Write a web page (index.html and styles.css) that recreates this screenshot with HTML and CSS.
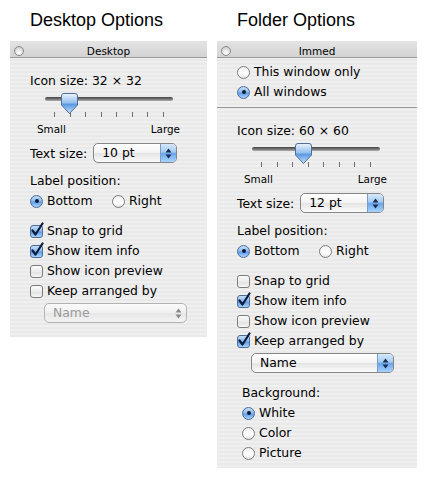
FILE: index.html
```html
<!DOCTYPE html>
<html>
<head>
<meta charset="utf-8">
<link rel="stylesheet" href="styles.css">
</head>
<body>
<div class="page">
  <div class="col">
    <h1 class="heading">Desktop Options</h1>
    <div class="panel panel-left">
      <div class="titlebar"><span class="close"></span><span class="title">Desktop</span><span></span></div>
      <div class="body">
        <div class="row">Icon size: 32 × 32</div>
        <div class="slider">
          <div class="track"></div>
          <div class="ticks"><i></i><i></i><i></i><i></i><i></i><i></i><i></i><i></i></div>
          <svg class="thumb" style="left:16px" viewBox="0 0 17 21"><defs><linearGradient id="tg1" x1="0" y1="0" x2="0" y2="1"><stop offset="0" stop-color="#eef5fd"/><stop offset="0.45" stop-color="#97c1ee"/><stop offset="0.55" stop-color="#5c9ae2"/><stop offset="1" stop-color="#c4e4ff"/></linearGradient></defs><path d="M3,0.5 H14 Q16.5,0.5 16.5,3 V12 L8.5,20.5 L0.5,12 V3 Q0.5,0.5 3,0.5 Z" fill="url(#tg1)" stroke="#506f98"/></svg>
        </div>
        <div class="scale"><span>Small</span><span>Large</span></div>
        <div class="field"><span>Text size:</span>
          <div class="popup"><span class="ptext">10 pt</span><span class="arrows"><svg viewBox="0 0 7 11" width="7" height="11"><path d="M0.5,4.5 L3.5,0.5 L6.5,4.5 Z M0.5,6.5 L3.5,10.5 L6.5,6.5 Z"/></svg></span></div>
        </div>
        <div class="row label">Label position:</div>
        <div class="row radios">
          <span class="opt first"><span class="rb on"></span>Bottom</span>
          <span class="opt"><span class="rb"></span>Right</span>
        </div>
        <div class="checks">
          <div class="row opt"><span class="cb on"><svg viewBox="0 0 14 15"><path d="M2.5,8.5 L5.5,12.5 L12.5,1.5"/></svg></span>Snap to grid</div>
          <div class="row opt"><span class="cb on"><svg viewBox="0 0 14 15"><path d="M2.5,8.5 L5.5,12.5 L12.5,1.5"/></svg></span>Show item info</div>
          <div class="row opt"><span class="cb"></span>Show icon preview</div>
          <div class="row opt"><span class="cb"></span>Keep arranged by</div>
        </div>
        <div class="popup wide disabled"><span class="ptext">Name</span><span class="arrows"><svg viewBox="0 0 7 11" width="7" height="11"><path d="M0.5,4.5 L3.5,0.5 L6.5,4.5 Z M0.5,6.5 L3.5,10.5 L6.5,6.5 Z"/></svg></span></div>
      </div>
    </div>
  </div>

  <div class="col">
    <h1 class="heading">Folder Options</h1>
    <div class="panel panel-right">
      <div class="titlebar"><span class="close"></span><span class="title">Immed</span><span></span></div>
      <div class="scope">
        <div class="row opt"><span class="rb"></span>This window only</div>
        <div class="row opt"><span class="rb on"></span>All windows</div>
      </div>
      <div class="body body-right">
        <div class="row">Icon size: 60 × 60</div>
        <div class="slider">
          <div class="track"></div>
          <div class="ticks"><i></i><i></i><i></i><i></i><i></i><i></i><i></i><i></i></div>
          <svg class="thumb" style="left:43px" viewBox="0 0 17 21"><defs><linearGradient id="tg2" x1="0" y1="0" x2="0" y2="1"><stop offset="0" stop-color="#eef5fd"/><stop offset="0.45" stop-color="#97c1ee"/><stop offset="0.55" stop-color="#5c9ae2"/><stop offset="1" stop-color="#c4e4ff"/></linearGradient></defs><path d="M3,0.5 H14 Q16.5,0.5 16.5,3 V12 L8.5,20.5 L0.5,12 V3 Q0.5,0.5 3,0.5 Z" fill="url(#tg2)" stroke="#506f98"/></svg>
        </div>
        <div class="scale"><span>Small</span><span>Large</span></div>
        <div class="field"><span>Text size:</span>
          <div class="popup"><span class="ptext">12 pt</span><span class="arrows"><svg viewBox="0 0 7 11" width="7" height="11"><path d="M0.5,4.5 L3.5,0.5 L6.5,4.5 Z M0.5,6.5 L3.5,10.5 L6.5,6.5 Z"/></svg></span></div>
        </div>
        <div class="row label">Label position:</div>
        <div class="row radios">
          <span class="opt first"><span class="rb on"></span>Bottom</span>
          <span class="opt"><span class="rb"></span>Right</span>
        </div>
        <div class="checks">
          <div class="row opt"><span class="cb"></span>Snap to grid</div>
          <div class="row opt"><span class="cb on"><svg viewBox="0 0 14 15"><path d="M2.5,8.5 L5.5,12.5 L12.5,1.5"/></svg></span>Show item info</div>
          <div class="row opt"><span class="cb"></span>Show icon preview</div>
          <div class="row opt"><span class="cb on"><svg viewBox="0 0 14 15"><path d="M2.5,8.5 L5.5,12.5 L12.5,1.5"/></svg></span>Keep arranged by</div>
        </div>
        <div class="popup wide"><span class="ptext">Name</span><span class="arrows"><svg viewBox="0 0 7 11" width="7" height="11"><path d="M0.5,4.5 L3.5,0.5 L6.5,4.5 Z M0.5,6.5 L3.5,10.5 L6.5,6.5 Z"/></svg></span></div>
        <div class="bg-group">
          <div class="row">Background:</div>
          <div class="row opt"><span class="rb on"></span>White</div>
          <div class="row opt"><span class="rb"></span>Color</div>
          <div class="row opt"><span class="rb"></span>Picture</div>
        </div>
      </div>
    </div>
  </div>
</div>
</body>
</html>
```
FILE: styles.css
```css
* { box-sizing: border-box; }
body {
  margin: 0;
  background: #fff;
  font-family: "DejaVu Sans", sans-serif;
  font-size: 12.4px;
  color: #000;
}
.page {
  display: flex;
  align-items: flex-start;
  gap: 10px;
  padding-left: 10px;
}
.heading {
  font-family: "Liberation Sans", Arial, sans-serif;
  font-size: 18px;
  line-height: 18px;
  font-weight: normal;
  margin: 11px 0 12px 20px;
}
.panel {
  background: repeating-linear-gradient(to bottom, #efefef 0 2px, #e9e9e9 2px 4px);
}
.panel-left { width: 197px; }
.panel-right { width: 200px; }

.titlebar {
  height: 17px;
  padding-top: 4px;
  border-bottom: 1px solid #9a9a9a;
  background: linear-gradient(#e4e4e4, #d3d3d3);
  display: grid;
  grid-template-columns: 1fr auto 1fr;
  align-items: center;
  font-size: 10.5px;
  line-height: 12px;
}
.close {
  width: 10px;
  height: 10px;
  margin-left: 4px;
  border-radius: 50%;
  border: 1px solid #8a8a8a;
  background: radial-gradient(circle at 50% 75%, #ffffff 0, #e6e6e6 45%, #bdbdbd 100%);
}

.body { padding: 13px 0 14px 20px; }
.body-right { padding: 13px 0 5px 20px; }
.scope {
  padding: 4px 0 5px 20px;
  border-bottom: 1px solid #9a9a9a;
}

.row { height: 20px; line-height: 20px; }
.opt { display: flex; align-items: center; gap: 4px; }

.slider {
  position: relative;
  width: 128px;
  height: 26px;
  padding-top: 6px;
  margin-left: 15px;
}
.track {
  height: 4px;
  border-radius: 2px;
  background: linear-gradient(#444444, #767676 55%, #b0b0b0);
}
.ticks {
  display: flex;
  justify-content: space-between;
  padding: 0 9px;
  margin-top: 11px;
  height: 5px;
}
.ticks i { width: 1px; height: 5px; background: #6e6e6e; }
.thumb {
  position: absolute;
  top: 2px;
  width: 17px;
  height: 21px;
}

.scale {
  display: flex;
  justify-content: space-between;
  width: 143px;
  margin: 6px 0 0 7px;
  font-size: 10.4px;
  line-height: 12px;
}

.field {
  display: flex;
  align-items: center;
  gap: 6px;
  height: 20px;
  margin-top: 8px;
}
.popup {
  display: flex;
  width: 84px;
  height: 20px;
  border: 1px solid #868686;
  border-radius: 5px;
  overflow: hidden;
  background: linear-gradient(#ffffff, #f3f3f3 48%, #e4e4e4 52%, #fbfbfb);
}
.popup.wide { width: 143px; margin: 2px 0 0 14px; }
.ptext { flex: 1; padding-left: 8px; line-height: 18px; }
.arrows {
  width: 16px;
  display: flex;
  align-items: center;
  justify-content: center;
  border-left: 1px solid #7b9cc4;
  background: linear-gradient(#d6e9fb, #a3cbf3 45%, #6aa5ea 52%, #a6d3ff);
}
.arrows svg { fill: #1a2c52; }
.popup.disabled {
  border-color: #b3b3b3;
  color: #9a9a9a;
  background: linear-gradient(#fafafa, #f0f0f0 48%, #e7e7e7 52%, #f4f4f4);
}
.popup.disabled .arrows { background: none; border-left: none; }
.popup.disabled .arrows svg { fill: #8a8a8a; }

.label { margin-top: 8px; }
.radios { display: flex; align-items: center; }
.radios .first { width: 82px; }
.checks { margin-top: 10px; }

.rb {
  flex: none;
  width: 13px;
  height: 13px;
  border-radius: 50%;
  border: 1px solid #7c7c7c;
  background: linear-gradient(#f0f0f0, #ffffff 60%, #e4e4e4);
  display: flex;
  align-items: center;
  justify-content: center;
}
.rb.on {
  border-color: #4e6d97;
  background: linear-gradient(#c4ddf7, #8fbdf0 45%, #5e9ce6 55%, #a9d5ff);
}
.rb.on::after {
  content: "";
  width: 4px;
  height: 4px;
  border-radius: 50%;
  background: #0c1a33;
}

.cb {
  flex: none;
  position: relative;
  width: 13px;
  height: 13px;
  border: 1px solid #7c7c7c;
  border-radius: 3px;
  background: linear-gradient(#fbfbfb, #ececec 50%, #e0e0e0 52%, #f6f6f6);
}
.cb.on {
  border-color: #4e6d97;
  background: linear-gradient(#c4ddf7, #8fbdf0 45%, #5e9ce6 55%, #a9d5ff);
}
.cb svg {
  position: absolute;
  left: -1px;
  top: -4px;
  width: 14px;
  height: 15px;
  fill: none;
  stroke: #0f1e3c;
  stroke-width: 2.2;
  stroke-linecap: round;
  stroke-linejoin: round;
}

.bg-group { margin: 10px 0 0 5px; }
```
